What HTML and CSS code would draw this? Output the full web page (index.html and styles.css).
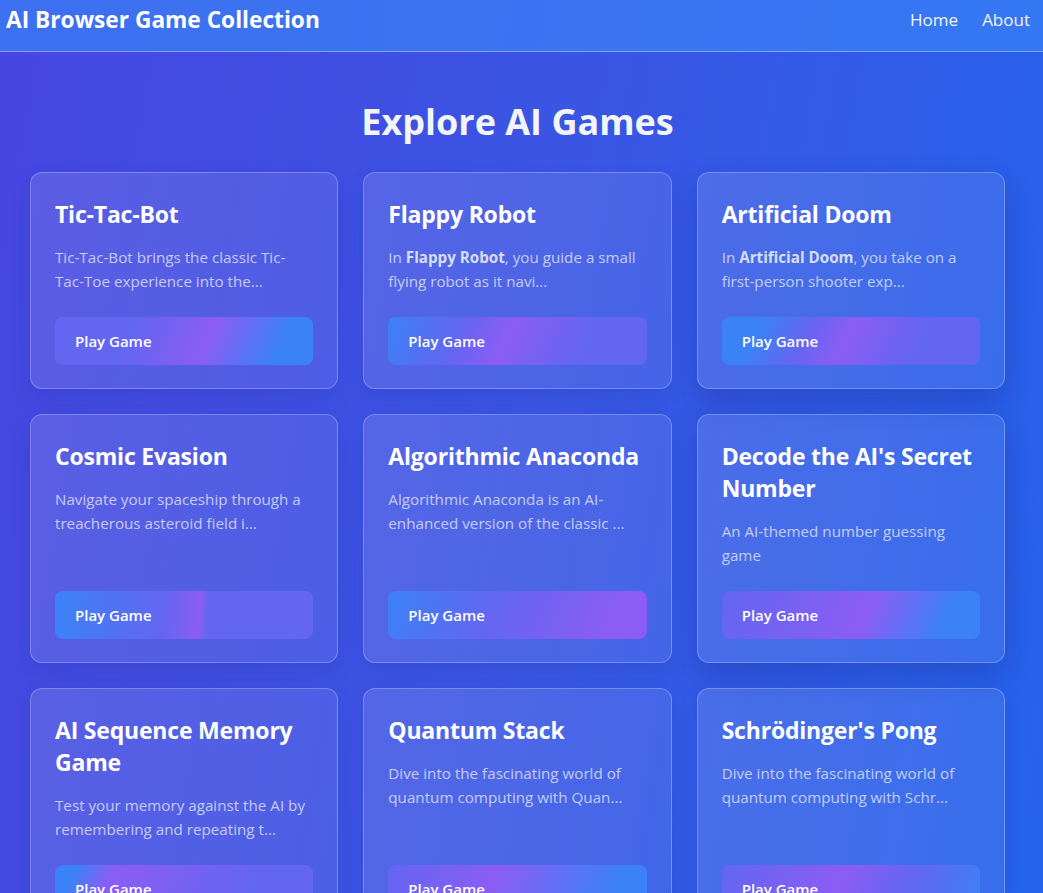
FILE: index.html
```html
<!DOCTYPE html>
<html lang="en">
<head>
<meta charset="utf-8">
<title>AI Browser Game Collection</title>
<link rel="stylesheet" href="styles.css">
</head>
<body>
<header class="site-header">
  <a class="brand" href="#">AI Browser Game Collection</a>
  <nav class="nav">
    <a href="#">Home</a>
    <a href="#">About</a>
  </nav>
</header>
<main class="main">
  <h1 class="page-title">Explore AI Games</h1>
  <div class="grid">
    <article class="card">
      <h2 class="card-title">Tic-Tac-Bot</h2>
      <p class="card-desc">Tic-Tac-Bot brings the classic Tic-Tac-Toe experience into the...</p>
      <a class="btn btn-a" href="#">Play Game</a>
    </article>
    <article class="card">
      <h2 class="card-title">Flappy Robot</h2>
      <p class="card-desc">In <strong>Flappy Robot</strong>, you guide a small flying robot as it navi...</p>
      <a class="btn btn-b" href="#">Play Game</a>
    </article>
    <article class="card card-raised">
      <h2 class="card-title">Artificial Doom</h2>
      <p class="card-desc">In <strong>Artificial Doom</strong>, you take on a first-person shooter exp...</p>
      <a class="btn btn-c" href="#">Play Game</a>
    </article>
    <article class="card">
      <h2 class="card-title">Cosmic Evasion</h2>
      <p class="card-desc">Navigate your spaceship through a treacherous asteroid field i...</p>
      <a class="btn btn-d" href="#">Play Game</a>
    </article>
    <article class="card">
      <h2 class="card-title">Algorithmic Anaconda</h2>
      <p class="card-desc">Algorithmic Anaconda is an AI-enhanced version of the classic ...</p>
      <a class="btn btn-e" href="#">Play Game</a>
    </article>
    <article class="card card-raised">
      <h2 class="card-title">Decode the AI's Secret Number</h2>
      <p class="card-desc">An AI-themed number guessing game</p>
      <a class="btn btn-f" href="#">Play Game</a>
    </article>
    <article class="card">
      <h2 class="card-title">AI Sequence Memory Game</h2>
      <p class="card-desc">Test your memory against the AI by remembering and repeating t...</p>
      <a class="btn btn-g" href="#">Play Game</a>
    </article>
    <article class="card">
      <h2 class="card-title">Quantum Stack</h2>
      <p class="card-desc">Dive into the fascinating world of quantum computing with Quan...</p>
      <a class="btn btn-h" href="#">Play Game</a>
    </article>
    <article class="card">
      <h2 class="card-title">Schrödinger's Pong</h2>
      <p class="card-desc">Dive into the fascinating world of quantum computing with Schr...</p>
      <a class="btn btn-i" href="#">Play Game</a>
    </article>
  </div>
</main>
</body>
</html>
```

FILE: styles.css
```css
* {
  box-sizing: border-box;
}

html, body {
  margin: 0;
  padding: 0;
}

body {
  font-family: "Open Sans", "Noto Sans", sans-serif;
  color: #ffffff;
  background: linear-gradient(100deg, #4646e0 0%, #3a55e4 50%, #2563eb 100%);
  background-attachment: fixed;
  min-height: 100vh;
}

a {
  text-decoration: none;
  color: inherit;
}

.site-header {
  display: flex;
  align-items: center;
  justify-content: space-between;
  height: 52px;
  padding: 0 13px 11px 6px;
  background: rgba(59, 130, 246, 0.7);
  border-bottom: 1px solid rgba(255, 255, 255, 0.35);
}

.brand {
  font-size: 22.7px;
  font-weight: 700;
  line-height: 32px;
  color: #ffffff;
}

.nav {
  display: flex;
  gap: 24px;
}

.nav a {
  font-size: 17px;
  line-height: 28px;
  color: #f3f4f6;
}

.main {
  padding: 50px 38px 40px 30px;
}

.page-title {
  margin: 0 0 30px;
  text-align: center;
  font-size: 36px;
  line-height: 40px;
  font-weight: 700;
  color: #f3f4f6;
}

.grid {
  display: grid;
  grid-template-columns: repeat(3, 1fr);
  gap: 25px;
}

.card {
  display: flex;
  flex-direction: column;
  padding: 25px 24px 23px;
  border-radius: 12px;
  background: linear-gradient(100deg, rgba(255, 255, 255, 0.12), rgba(255, 255, 255, 0.08));
  border: 1px solid rgba(255, 255, 255, 0.25);
  box-shadow: 0 8px 20px rgba(20, 30, 120, 0.12);
}

.card-raised {
  box-shadow: 0 12px 28px rgba(20, 30, 120, 0.28);
}

.card-title {
  margin: 0 0 15px;
  font-size: 23px;
  letter-spacing: -0.2px;
  line-height: 32px;
  font-weight: 700;
  color: #ffffff;
}

.card-desc {
  margin: 0 0 24px;
  font-size: 15.2px;
  line-height: 24px;
  color: rgba(226, 228, 245, 0.82);
}

.card-desc strong {
  color: rgba(235, 236, 248, 0.9);
}

.btn {
  margin-top: auto;
  display: block;
  height: 48px;
  padding: 0 20px;
  border-radius: 8px;
  font-size: 15px;
  font-weight: 600;
  line-height: 48px;
  color: #ffffff;
}

.btn-a {
  background: linear-gradient(115deg, #6366f1 0%, #6366f1 30%, #8b5cf6 58%, #3b82f6 85%);
}

.btn-b {
  background: linear-gradient(115deg, #3b82f6 0%, #6366f1 28%, #8b5cf6 45%, #6366f1 75%, #6366f1 100%);
}

.btn-c {
  background: linear-gradient(115deg, #3b82f6 0%, #3b82f6 15%, #6366f1 32%, #8b5cf6 48%, #6366f1 75%, #6366f1 100%);
}

.btn-d {
  background: linear-gradient(95deg, #3b82f6 0%, #6366f1 42%, #8b5cf6 56%, #6366f1 59%, #6366f1 100%);
}

.btn-e {
  background: linear-gradient(115deg, #3b82f6 0%, #6366f1 40%, #8b5cf6 85%, #8b5cf6 100%);
}

.btn-f {
  background: linear-gradient(115deg, #6366f1 0%, #8b5cf6 55%, #3b82f6 85%, #3b82f6 100%);
}

.btn-g {
  background: linear-gradient(115deg, #3b82f6 0%, #3b82f6 8%, #8b5cf6 22%, #6366f1 75%, #6366f1 100%);
}

.btn-h {
  background: linear-gradient(115deg, #6366f1 0%, #8b5cf6 40%, #3b82f6 85%, #3b82f6 100%);
}

.btn-i {
  background: linear-gradient(115deg, #6366f1 0%, #8b5cf6 45%, #6366f1 70%, #3b82f6 100%);
}
```
